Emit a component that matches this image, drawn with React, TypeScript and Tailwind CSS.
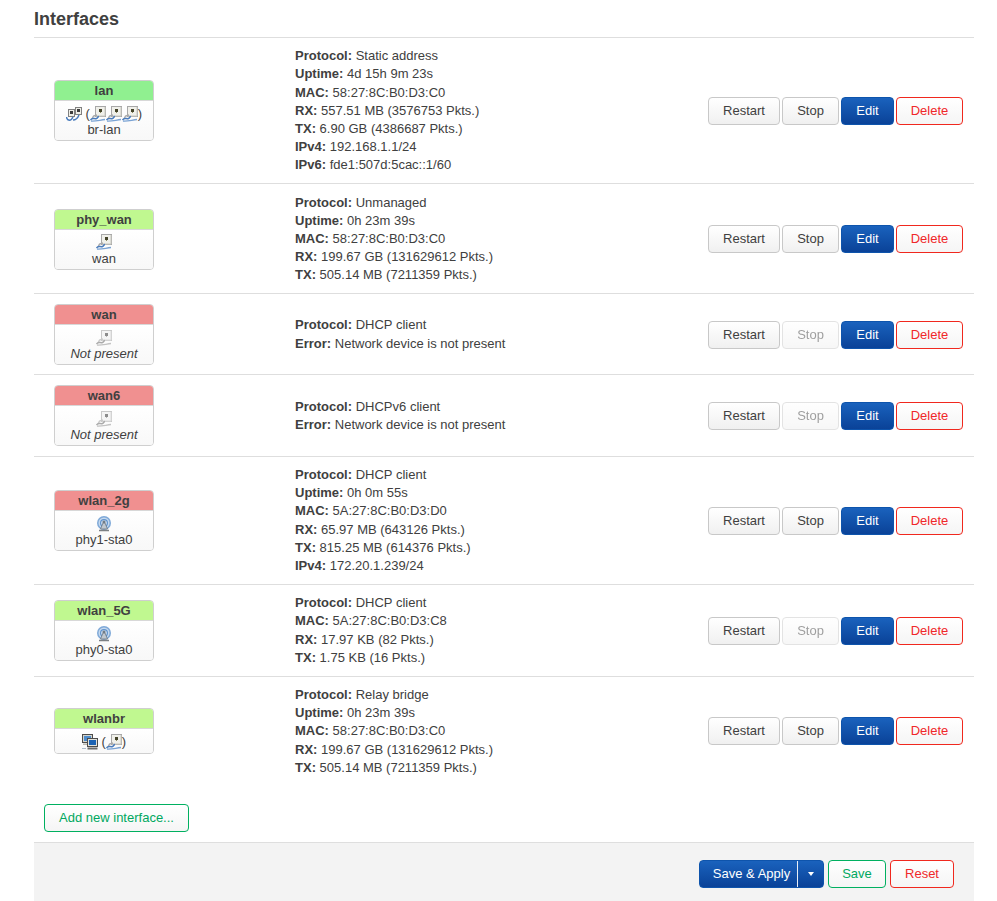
const FONT = "font-['Liberation_Sans',Arial,sans-serif]";

/* Iconos de dispositivos */
const EthernetIcon = ({ off = false }: { off?: boolean }) => (
  <svg width="16" height="16" viewBox="0 0 16 16" className={off ? 'grayscale opacity-60' : ''}>
    <rect x="5.5" y="0.5" width="10" height="10" fill="#f0f0ea" stroke="#a8a8a8" />
    <path d="M15 1 V10 H6" fill="none" stroke="#c8c8c0" />
    <rect x="9" y="3" width="3" height="3" fill="#44442a" />
    <rect x="10" y="6" width="1" height="1" fill="#8c8c60" />
    <path d="M7 9 L3.5 10 L2 13" fill="none" stroke="#a8a8a8" strokeWidth="1.4" />
    <path d="M0.5 14 C2.5 11 4.5 13.5 6.5 12.5 C8 12 7.5 10.5 9 10.5" fill="none" stroke="#4a7cbc" strokeWidth="1.5" />
    <path d="M1 15 C5 15.5 10 14 15 13.5" fill="none" stroke="#7aa3d4" strokeWidth="1.3" />
  </svg>
);

const SwitchIcon = () => (
  <svg width="16" height="16" viewBox="0 0 16 16">
    <rect x="9.5" y="1.5" width="6" height="7" fill="#efefe8" stroke="#808080" />
    <rect x="11" y="3" width="3" height="3" fill="#3c3c3c" />
    <rect x="2.5" y="3.5" width="6" height="7" fill="#efefe8" stroke="#808080" />
    <rect x="4" y="5" width="3" height="3" fill="#3c3c3c" />
    <path d="M0.5 11 C1 15 5 15.5 7 11 M7 14 C10 14 12 11.5 13 9" fill="none" stroke="#4a7cbc" strokeWidth="1.5" />
  </svg>
);

const WifiIcon = () => (
  <svg width="16" height="16" viewBox="0 0 16 16">
    <circle cx="8" cy="7" r="7" fill="#7fa9d8" />
    <circle cx="8" cy="7" r="5.5" fill="#c4d8ee" />
    <circle cx="8" cy="7" r="4" fill="#5f92cc" />
    <circle cx="8" cy="7" r="2.8" fill="#d6e4f3" />
    <circle cx="8" cy="6" r="1.6" fill="#6f7c88" />
    <path d="M7 7 L4.5 13 H11.5 L9 7 Z" fill="#c0c8d0" stroke="#6c7680" strokeWidth="0.8" />
    <path d="M3 14.5 H13" stroke="#7c8084" strokeWidth="1.4" />
  </svg>
);

const BridgeIcon = () => (
  <svg width="16" height="16" viewBox="0 0 16 16">
    <rect x="0.5" y="0.5" width="10" height="8" fill="#d4d4cc" stroke="#4c4c4c" />
    <rect x="2" y="2" width="7" height="5" fill="#4e8ccc" />
    <path d="M1 9.5 H5 V11 H1 Z" fill="#b8b8b0" />
    <rect x="5.5" y="4.5" width="10" height="8" fill="#e2e2da" stroke="#4c4c4c" />
    <rect x="7" y="6" width="7" height="5" fill="#1c63b4" />
    <path d="M5.5 14.5 H15.5" stroke="#6c6c6c" strokeWidth="2" />
    <path d="M0.5 14.5 H4" stroke="#5f7f9f" strokeWidth="1" strokeDasharray="1 1" />
  </svg>
);

const Paren = ({ children }: { children: string }) => <span className="text-[#404040]">{children}</span>;

type Row = {
  name: string;
  color: string;
  icons: React.ReactNode;
  device?: string;
  missing?: boolean;
  info: [string, string][];
  stopOff?: boolean;
};

const rows: Row[] = [
  {
    name: 'lan',
    color: 'bg-[#90f090]',
    device: 'br-lan',
    icons: (
      <>
        <SwitchIcon />
        <Paren>&nbsp;(</Paren>
        <EthernetIcon />
        <EthernetIcon />
        <EthernetIcon />
        <Paren>)</Paren>
      </>
    ),
    info: [
      ['Protocol', 'Static address'],
      ['Uptime', '4d 15h 9m 23s'],
      ['MAC', '58:27:8C:B0:D3:C0'],
      ['RX', '557.51 MB (3576753 Pkts.)'],
      ['TX', '6.90 GB (4386687 Pkts.)'],
      ['IPv4', '192.168.1.1/24'],
      ['IPv6', 'fde1:507d:5cac::1/60'],
    ],
  },
  {
    name: 'phy_wan',
    color: 'bg-[#c0f890]',
    device: 'wan',
    icons: <EthernetIcon />,
    info: [
      ['Protocol', 'Unmanaged'],
      ['Uptime', '0h 23m 39s'],
      ['MAC', '58:27:8C:B0:D3:C0'],
      ['RX', '199.67 GB (131629612 Pkts.)'],
      ['TX', '505.14 MB (7211359 Pkts.)'],
    ],
  },
  {
    name: 'wan',
    color: 'bg-[#f09090]',
    device: 'Not present',
    missing: true,
    stopOff: true,
    icons: <EthernetIcon off />,
    info: [
      ['Protocol', 'DHCP client'],
      ['Error', 'Network device is not present'],
    ],
  },
  {
    name: 'wan6',
    color: 'bg-[#f09090]',
    device: 'Not present',
    missing: true,
    stopOff: true,
    icons: <EthernetIcon off />,
    info: [
      ['Protocol', 'DHCPv6 client'],
      ['Error', 'Network device is not present'],
    ],
  },
  {
    name: 'wlan_2g',
    color: 'bg-[#f09090]',
    device: 'phy1-sta0',
    icons: <WifiIcon />,
    info: [
      ['Protocol', 'DHCP client'],
      ['Uptime', '0h 0m 55s'],
      ['MAC', '5A:27:8C:B0:D3:D0'],
      ['RX', '65.97 MB (643126 Pkts.)'],
      ['TX', '815.25 MB (614376 Pkts.)'],
      ['IPv4', '172.20.1.239/24'],
    ],
  },
  {
    name: 'wlan_5G',
    color: 'bg-[#c0f890]',
    device: 'phy0-sta0',
    stopOff: true,
    icons: <WifiIcon />,
    info: [
      ['Protocol', 'DHCP client'],
      ['MAC', '5A:27:8C:B0:D3:C8'],
      ['RX', '17.97 KB (82 Pkts.)'],
      ['TX', '1.75 KB (16 Pkts.)'],
    ],
  },
  {
    name: 'wlanbr',
    color: 'bg-[#c0f890]',
    icons: (
      <>
        <BridgeIcon />
        <Paren>&nbsp;(</Paren>
        <EthernetIcon />
        <Paren>)</Paren>
      </>
    ),
    info: [
      ['Protocol', 'Relay bridge'],
      ['Uptime', '0h 23m 39s'],
      ['MAC', '58:27:8C:B0:D3:C0'],
      ['RX', '199.67 GB (131629612 Pkts.)'],
      ['TX', '505.14 MB (7211359 Pkts.)'],
    ],
  },
];

const BTN = 'h-7 rounded-[4px] border text-[13px] leading-[18px] flex items-center justify-center bg-linear-to-b';
const NEUTRAL = `${BTN} from-white to-[#f0f0f0] border-[#c8c8c8] text-[#404040]`;
const PRIMARY = `${BTN} from-[#1a62bd] to-[#0a4298] border-[#0e54ac] text-white`;
const DANGER = `${BTN} from-white to-[#f5f5f5] border-[#f0281e] text-[#f0282a]`;
const POSITIVE = `${BTN} from-white to-[#f5f5f5] border-[#00b060] text-[#00a860]`;

const Badge = ({ row }: { row: Row }) => (
  <div className="w-[100px] rounded-[4px] border border-[#cfcfcf] overflow-hidden text-[13px] text-[#404040] text-center">
    <div className={`${row.color} h-5 leading-[19px] font-bold border-b border-[#d8d8d8]`}>{row.name}</div>
    <div className="bg-linear-to-b from-white to-[#f8f8f8] pt-1 pb-[3px]">
      <div className="flex items-center justify-center h-[17px] leading-none">{row.icons}</div>
      {row.device && (
        <div className={`leading-[15px] ${row.missing ? 'italic' : ''}`}>{row.device}</div>
      )}
    </div>
  </div>
);

export default function App() {
  return (
    <div className={`${FONT} w-[997px] h-[901px] overflow-hidden bg-white text-[#404040] text-[13px] leading-[18.2px] pl-[34px] pr-[23px]`}>
      <h3 className="h-[37.8px] pt-[8px] text-[18px] leading-[22px] font-bold border-b border-[#dedede]">Interfaces</h3>

      {rows.map((row, i) => (
        <div
          key={row.name}
          className={`flex items-center pt-[9.4px] pb-[8.6px] ${i < rows.length - 1 ? 'border-b border-[#dedede]' : ''}`}
        >
          <div className="w-[261px] pl-5 py-[0.6px] shrink-0">
            <Badge row={row} />
          </div>
          <div className="flex-1">
            {row.info.map(([label, value]) => (
              <div key={label}>
                <strong className="font-bold">{label}:</strong> {value}
              </div>
            ))}
          </div>
          <div className="flex gap-0.5 pr-[11px]">
            <button className={`${NEUTRAL} w-[72px]`}>Restart</button>
            <button className={`${NEUTRAL} w-[57px] ${row.stopOff ? 'opacity-50' : ''}`}>Stop</button>
            <button className={`${PRIMARY} w-[53px]`}>Edit</button>
            <button className={`${DANGER} w-[67px]`}>Delete</button>
          </div>
        </div>
      ))}

      <div className="pl-2.5 pt-[18.4px] pb-2.5">
        <button className={`${POSITIVE} w-[145px]`}>Add new interface...</button>
      </div>

      <div className="flex justify-end gap-1 h-[60px] pt-[17px] pr-5 bg-[#f3f3f3] border-t border-[#dedede]">
        <div className={`${PRIMARY} w-[125px]`}>
          <span className="flex-1 text-center border-r border-white/90 h-[26px] leading-[26px] pl-1.5">Save &amp; Apply</span>
          <span className="w-[25px] flex justify-center">
            <span className="border-x-[3px] border-x-transparent border-t-[4px] border-t-white" />
          </span>
        </div>
        <button className={`${POSITIVE} w-[58px]`}>Save</button>
        <button className={`${DANGER} w-[64px]`}>Reset</button>
      </div>
    </div>
  );
}
